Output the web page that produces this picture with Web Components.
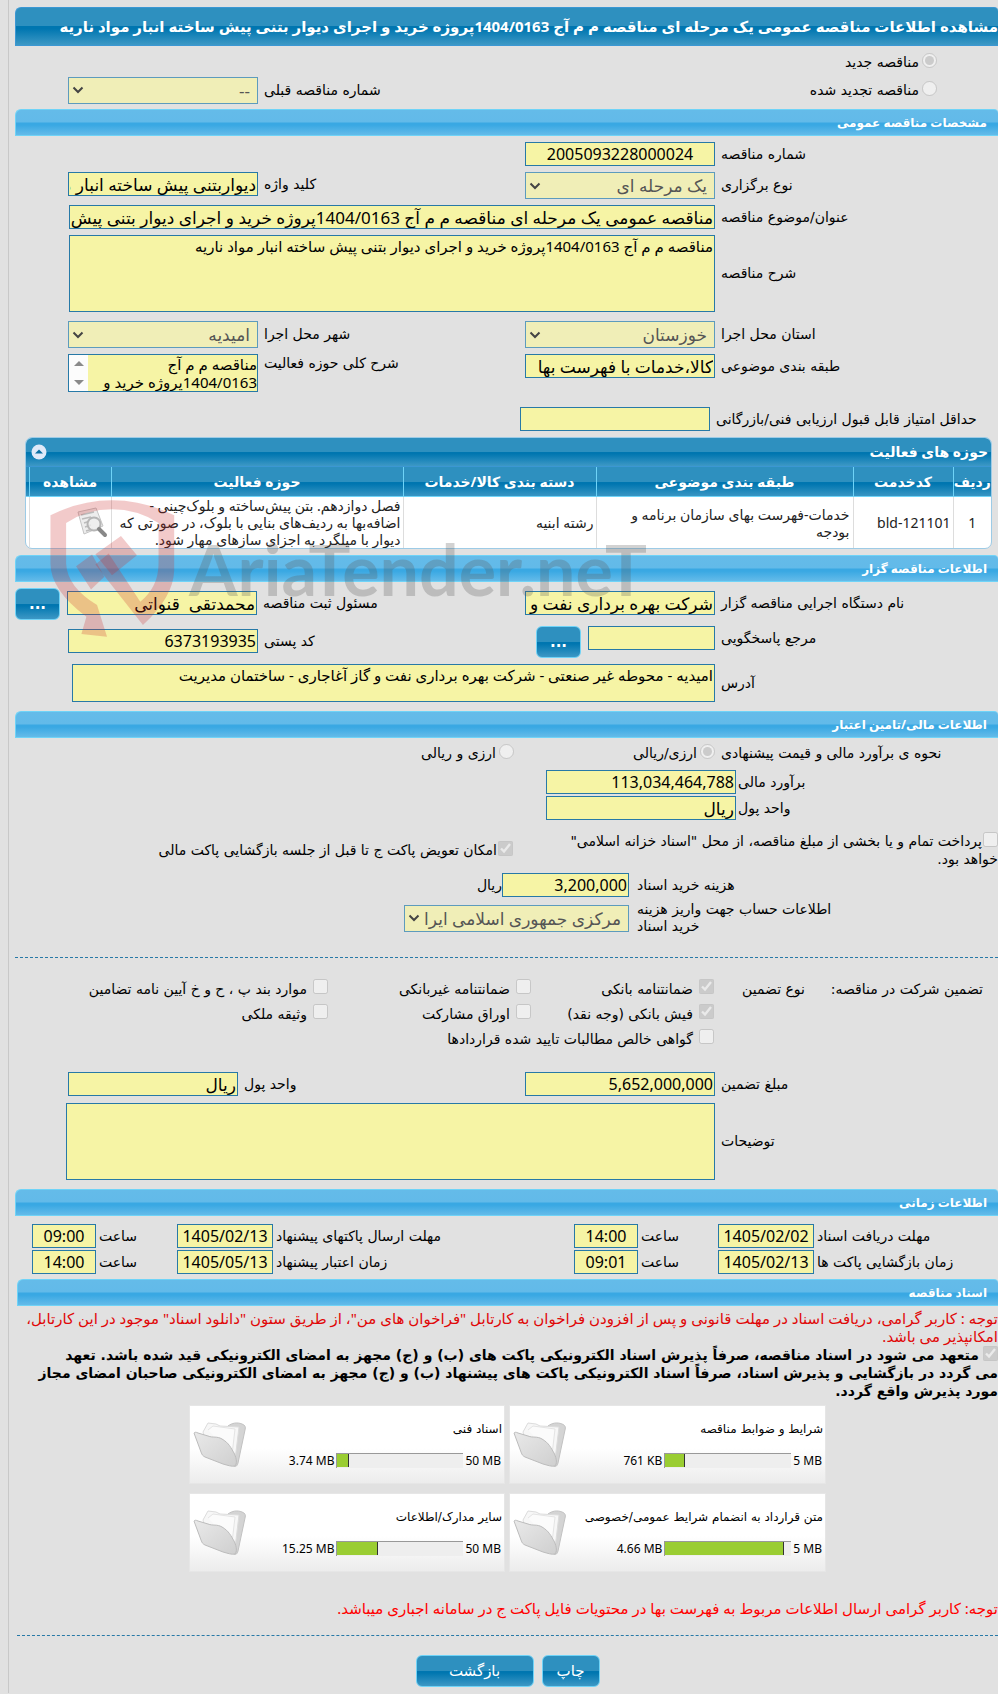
<!DOCTYPE html>
<html lang="fa" dir="rtl">
<head>
<meta charset="utf-8">
<meta name="viewport" content="width=device-width, initial-scale=1">
<title>مشاهده اطلاعات مناقصه عمومی</title>
<style>
    :root {
        --sans: 'DejaVu Sans', sans-serif;
        --mixed: 'Noto Sans', 'DejaVu Sans', sans-serif;
        --line: #2779a7;
        --field: #f6f4a5;
        --dark-bar: linear-gradient(#2e90bf 0, #2e90bf 50%, #0076b0 50%, #0076b0 56%, #3d98c5 100%);
        --light-bar: linear-gradient(#64bbe9 0, #62bae9 48%, #39a8e3 52%, #39a8e3 60%, #64bbe9 100%);
    }
    body {
        margin: 0;
        background: #e1e1e1;
        color: #000;
        font: 14px/18px var(--sans);
        overflow-x: hidden;
    }
    p { margin: 0; }
    hr {
        border: 0;
        border-top: 1px dashed var(--line);
        margin: 0;
    }
    .origin {
        display: grid;
        grid-template-columns: 473px 1fr;
        grid-template-rows: 28px 28px;
        align-items: center;
        padding: 2px 0 5px 53px;
    }
    .origin choice-box { padding-right: 61px; grid-column: 1; }
    .origin form-field { grid-area: 2 / 2; --label: 1fr; }
    .stack {
        display: flex;
        flex-direction: column;
        gap: 6px;
        padding: 6px 0;
    }
    .row {
        display: grid;
        grid-template-columns: 473px 1fr;
        padding-left: 53px;
        align-items: start;
    }
    .row > form-field:nth-of-type(2) { --label: 1fr; }
    .wide { --control: 1fr; padding-left: 54px; }
    .notes { padding-left: 51px; margin-top: 1px; }
    .top-gap { margin-top: 3px; }
    .score { --label: 288px; margin-top: 9px; }
    .short { --control: 170px; }
    .owner { padding: 9px 0; }
    .owner .row { padding-left: 0; }
    .owner .wide { padding-left: 57px; }
    .with-button { display: flex; gap: 7px; align-items: start; }
    .with-button form-field { flex: none; }
    .reply form-field { --control: 127px; }
    .grow { justify-content: space-between; }
    .grow form-field { flex: 1; --label: 1fr; }
    .grow ui-button { margin-top: -3px; }
    .postal { padding: 3px 0 0 53px; }
    .money { --label: 262px; --pad: 2px; }
    .kind {
        display: grid;
        grid-template-columns: 283px 201px 1fr;
        height: 30px;
        align-items: center;
    }
    .kind span { text-align: left; padding-left: 6px; }
    .finance { display: flex; flex-direction: column; gap: 2px; padding-top: 2px; }
    .options {
        display: grid;
        grid-template-columns: 450px 1fr;
        column-gap: 35px;
        padding: 12px 0 5px;
    }
    .options choice-box { align-self: center; --gap: 1px; }
    .fees { padding: 0 0 22px; gap: 4px; }
    .cost { --label: 369px; --pad: 8px; --control: 127px; }
    .account { --label: 369px; --pad: 8px; --control: 225px; --start: 145px; }
    .guarantee {
        display: grid;
        grid-template-columns: 178px 91px 183px 203px 1fr;
        grid-auto-rows: 25px;
        padding: 18px 15px 15px 0;
        align-items: center;
    }
    .guarantee choice-box { --gap: 6px; }
    .guarantee .first { grid-column: 3; }
    .guarantee .span { grid-column: 3 / 5; }
    .amounts { padding-bottom: 9px; }
    .times {
        display: grid;
        grid-template-columns: 280px 144px 1fr 145px;
        row-gap: 2px;
        padding: 8px 0 5px 17px;
        --label: 1fr;
        --pad: 3px;
    }
    .times form-field:nth-child(odd) { --control: 96px; }
    .times form-field:nth-child(even) { --control: 64px; }
    .docs { padding-left: 2px; }
    .note { color: #e00808; font: 15px/18px var(--mixed); padding-top: 3px; }
    .pledge { font-weight: bold; padding-top: 1px; margin-bottom: 5px; --gap: 4px; }
    .cards {
        display: grid;
        grid-template-columns: 317px 316px;
        gap: 9px 4px;
        justify-content: center;
    }
    .last-note { color: #ff0000; font: 15px/18px var(--mixed); padding: 27px 0 18px; }
    .actions {
        display: flex;
        justify-content: center;
        gap: 8px;
        padding: 19px 0 6px;
    }
</style>
</head>
<body>
<page-frame>
    <title-bar>مشاهده اطلاعات مناقصه عمومی یک مرحله ای مناقصه م م آج 1404/0163پروژه خرید و اجرای دیوار بتنی پیش ساخته انبار مواد ناریه</title-bar>

    <div class="origin">
        <choice-box type="radio" checked>مناقصه جدید</choice-box>
        <choice-box type="radio">مناقصه تجدید شده</choice-box>
        <form-field type="select" label="شماره مناقصه قبلی" value="--"></form-field>
    </div>

    <section-bar>مشخصات مناقصه عمومی</section-bar>
    <div class="stack">
        <div class="row"><form-field type="number" align="center" label="شماره مناقصه" value="2005093228000024"></form-field></div>
        <div class="row">
            <form-field type="select" label="نوع برگزاری" value="یک مرحله ای"></form-field>
            <form-field label="کلید واژه" value="دیواربتنی پیش ساخته انبار مواد ناریه"></form-field>
        </div>
        <form-field class="wide" label="عنوان/موضوع مناقصه" value="مناقصه عمومی یک مرحله ای مناقصه م م آج 1404/0163پروژه خرید و اجرای دیوار بتنی پیش ساخته انبار مواد ناریه"></form-field>
        <form-field class="wide" type="area" rows="77" label="شرح مناقصه" value="مناقصه م م آج 1404/0163پروژه خرید و اجرای دیوار بتنی پیش ساخته انبار مواد ناریه"></form-field>
        <div class="row top-gap">
            <form-field type="select" label="استان محل اجرا" value="خوزستان"></form-field>
            <form-field type="select" label="شهر محل اجرا" value="امیدیه"></form-field>
        </div>
        <div class="row">
            <form-field label="طبقه بندی موضوعی" value="کالا،خدمات با فهرست بها"></form-field>
            <form-field type="scroll" rows="38" label="شرح کلی حوزه فعالیت" value="مناقصه م م آج 1404/0163پروژه خرید و اجرای دیوار بتنی پیش ساخته انبار مواد ناریه"></form-field>
        </div>
        <form-field class="score" type="number" label="حداقل امتیاز قابل قبول ارزیابی فنی/بازرگانی"></form-field>
    </div>

    <activity-table></activity-table>

    <section-bar>اطلاعات مناقصه گزار</section-bar>
    <div class="stack owner">
        <div class="row">
            <form-field label="نام دستگاه اجرایی مناقصه گزار" value="شرکت بهره برداری نفت و گاز آغاجاری"></form-field>
            <div class="with-button grow">
                <form-field label="مسئول ثبت مناقصه" value="محمدتقی  قنواتی"></form-field>
                <ui-button width="45" dots>...</ui-button>
            </div>
        </div>
        <div class="row">
            <div class="with-button reply">
                <form-field label="مرجع پاسخگویی"></form-field>
                <ui-button width="45" dots>...</ui-button>
            </div>
            <div class="with-button grow postal">
                <form-field type="number" label="کد پستی" value="6373193935"></form-field>
            </div>
        </div>
        <form-field class="wide" type="area" rows="38" label="آدرس" value="امیدیه - محوطه غیر صنعتی - شرکت بهره برداری نفت و گاز آغاجاری - ساختمان مدیریت"></form-field>
    </div>

    <section-bar>اطلاعات مالی/تامین اعتبار</section-bar>
    <div class="kind">
        <span>نحوه ی برآورد مالی و قیمت پیشنهادی</span>
        <choice-box type="radio" checked>ارزی/ریالی</choice-box>
        <choice-box type="radio">ارزی و ریالی</choice-box>
    </div>
    <div class="finance">
        <form-field class="money" type="number" label="برآورد مالی" value="113,034,464,788"></form-field>
        <form-field class="money" label="واحد پول" value="ریال"></form-field>
    </div>
    <div class="options">
        <choice-box flow>پرداخت تمام و یا بخشی از مبلغ مناقصه، از محل "اسناد خزانه اسلامی" خواهد بود.</choice-box>
        <choice-box checked>امکان تعویض پاکت ج تا قبل از جلسه بازگشایی پاکت مالی</choice-box>
    </div>
    <div class="stack fees">
        <form-field class="cost" type="number" label="هزینه خرید اسناد" value="3,200,000">ریال</form-field>
        <form-field class="account" type="select" label="اطلاعات حساب جهت واریز هزینه خرید اسناد" value="مرکزی جمهوری اسلامی ایرا"></form-field>
    </div>

    <hr>
    <div class="guarantee">
        <span>تضمین شرکت در مناقصه:</span>
        <span>نوع تضمین</span>
        <choice-box checked>ضمانتنامه بانکی</choice-box>
        <choice-box>ضمانتنامه غیربانکی</choice-box>
        <choice-box>موارد بند پ ، ح و خ آیین نامه تضامین</choice-box>
        <choice-box class="first" checked>فیش بانکی (وجه نقد)</choice-box>
        <choice-box>اوراق مشارکت</choice-box>
        <choice-box>وثیقه ملکی</choice-box>
        <choice-box class="span">گواهی خالص مطالبات تایید شده قراردادها</choice-box>
    </div>
    <div class="stack amounts">
        <div class="row">
            <form-field type="number" label="مبلغ تضمین" value="5,652,000,000"></form-field>
            <form-field class="short" label="واحد پول" value="ریال"></form-field>
        </div>
        <form-field class="wide notes" type="area" rows="77" label="توضیحات"></form-field>
    </div>

    <section-bar>اطلاعات زمانی</section-bar>
    <div class="times">
        <form-field type="number" align="center" label="مهلت دریافت اسناد" value="1405/02/02"></form-field>
        <form-field type="number" align="center" label="ساعت" value="14:00"></form-field>
        <form-field type="number" align="center" label="مهلت ارسال پاکتهای پیشنهاد" value="1405/02/13"></form-field>
        <form-field type="number" align="center" label="ساعت" value="09:00"></form-field>
        <form-field type="number" align="center" label="زمان بازگشایی پاکت ها" value="1405/02/13"></form-field>
        <form-field type="number" align="center" label="ساعت" value="09:01"></form-field>
        <form-field type="number" align="center" label="زمان اعتبار پیشنهاد" value="1405/05/13"></form-field>
        <form-field type="number" align="center" label="ساعت" value="14:00"></form-field>
    </div>

    <div class="docs">
        <section-bar>اسناد مناقصه</section-bar>
        <p class="note">توجه : کاربر گرامی، دریافت اسناد در مهلت قانونی و پس از افزودن فراخوان به کارتابل "فراخوان های من"، از طریق ستون "دانلود اسناد" موجود در این کارتابل، امکانپذیر می باشد.</p>
        <choice-box class="pledge" flow checked>متعهد می شود در اسناد مناقصه، صرفاً پذیرش اسناد الکترونیکی پاکت های (ب) و (ج) مجهز به امضای الکترونیکی قید شده باشد. تعهد<br>می گردد در بازگشایی و پذیرش اسناد، صرفاً اسناد الکترونیکی پاکت های پیشنهاد (ب) و (ج) مجهز به امضای الکترونیکی صاحبان امضای مجاز<br>مورد پذیرش واقع گردد.</choice-box>
        <div class="cards">
            <file-card name="شرایط و ضوابط مناقصه" used="761 KB" limit="5 MB" percent="16"></file-card>
            <file-card name="اسناد فنی" used="3.74 MB" limit="50 MB" percent="9"></file-card>
            <file-card name="متن قرارداد به انضمام شرایط عمومی/خصوصی" used="4.66 MB" limit="5 MB" percent="94"></file-card>
            <file-card name="سایر مدارک/اطلاعات" used="15.25 MB" limit="50 MB" percent="32"></file-card>
        </div>
        <p class="last-note">توجه: کاربر گرامی ارسال اطلاعات مربوط به فهرست بها در محتویات فایل پاکت ج در سامانه اجباری میباشد.</p>
        <hr>
        <div class="actions">
            <ui-button width="58">چاپ</ui-button>
            <ui-button width="118">بازگشت</ui-button>
        </div>
    </div>

    <site-watermark slot="over"></site-watermark>
</page-frame>

<script>
    class PageFrame extends HTMLElement {
        constructor() {
            super();
            this.attachShadow({mode: 'open'}).innerHTML = `
            <style>
                :host {
                    display: block;
                    position: relative;
                }
                main {
                    margin-left: 8px;
                    border-left: 1px solid #c8c8c8;
                    padding: 7px 0 0 6px;
                }
            </style>
            <main><slot></slot></main>
            <slot name="over"></slot>
            `;
        }
    }

    class TitleBar extends HTMLElement {
        constructor() {
            super();
            this.attachShadow({mode: 'open'}).innerHTML = `
            <style>
                :host {
                    display: block;
                    box-sizing: border-box;
                    border: 1px solid #3b97d3;
                    border-right: 0;
                    border-radius: 6px 4px 0 0;
                    background: var(--dark-bar);
                    overflow: hidden;
                }
                h1 {
                    margin: 0;
                    color: #fff;
                    font: bold 15px/37px var(--mixed);
                    white-space: nowrap;
                }
            </style>
            <h1><slot></slot></h1>
            `;
        }
    }

    class SectionBar extends HTMLElement {
        constructor() {
            super();
            this.attachShadow({mode: 'open'}).innerHTML = `
            <style>
                :host {
                    display: block;
                    box-sizing: border-box;
                    border: 1px solid #6fd3f7;
                    border-right: 0;
                    border-radius: 6px 4px 0 0;
                    background: var(--light-bar);
                    padding-right: 11px;
                }
                h2 {
                    margin: 0;
                    color: #fff;
                    font: bold 12px/25px var(--mixed);
                }
            </style>
            <h2><slot></slot></h2>
            `;
        }
    }

    class ChoiceBox extends HTMLElement {
        constructor() {
            super();
            const type = this.getAttribute('type') || 'checkbox';
            const checked = this.hasAttribute('checked') ? 'checked' : '';
            this.attachShadow({mode: 'open'}).innerHTML = `
            <style>
                :host { display: block; }
                label {
                    display: flex;
                    align-items: center;
                    gap: var(--gap, 3px);
                    white-space: nowrap;
                }
                input {
                    flex: none;
                    width: 15px;
                    height: 15px;
                    margin: 0 0 4px;
                }
                :host([flow]) label {
                    display: block;
                    white-space: normal;
                }
                :host([flow]) input {
                    margin: 0 0 0 var(--gap, 0);
                    vertical-align: -1px;
                }
            </style>
            <label><input type="${type}" ${checked} disabled><span><slot></slot></span></label>
            `;
        }
    }

    class FormField extends HTMLElement {
        constructor() {
            super();
            this.attachShadow({mode: 'open'}).innerHTML = `
            <style>
                :host {
                    display: grid;
                    grid-template-columns: var(--label, 283px) var(--control, 190px) auto;
                    justify-content: start;
                }
                label {
                    box-sizing: border-box;
                    align-self: center;
                    text-align: left;
                    padding-left: var(--pad, 6px);
                    padding-right: var(--start, 0);
                    line-height: 17px;
                }
                :host([type=scroll]) label { align-self: start; padding-top: 1px; }
                .suffix { align-self: center; line-height: 17px; }
                input, textarea, select, .box {
                    box-sizing: border-box;
                    width: 100%;
                    margin: 0;
                    border: 1px solid var(--line);
                    border-radius: 0;
                    background: var(--field);
                    color: #000;
                    font-family: var(--mixed);
                    font-size: 17px;
                }
                input {
                    height: 24px;
                    padding: 0 1px;
                }
                input.number { font-size: 16px; }
                input.center { text-align: center; }
                textarea {
                    display: block;
                    padding: 1px;
                    resize: none;
                    overflow: hidden;
                    font-size: 15px;
                    line-height: 18px;
                }
                .pick {
                    display: grid;
                    align-items: center;
                    justify-items: end;
                }
                .pick > * { grid-area: 1 / 1; }
                select {
                    appearance: none;
                    height: 27px;
                    padding: 0 7px 0 14px;
                    border-color: #5d9bbd;
                    background: #f0eeb7;
                    color: #555;
                    opacity: 1;
                }
                .pick svg {
                    margin-left: 4px;
                    pointer-events: none;
                }
                .box { display: flex; }
                .box textarea { border: 0; flex: 1; width: auto; min-width: 0; padding: 0; }
                .bar {
                    flex: none;
                    width: 19px;
                    background: #fcfcfc;
                    display: flex;
                    flex-direction: column;
                    justify-content: space-between;
                    align-items: center;
                    padding: 6px 0;
                    box-sizing: border-box;
                }
            </style>
            <label for="control">${this.getAttribute('label')}</label>
            ${this.control()}
            <span class="suffix"><slot></slot></span>
            `;
        }
        control() {
            const type = this.getAttribute('type') || 'text';
            const value = this.getAttribute('value') || '';
            const height = this.getAttribute('rows');
            if (type == 'select') {
                return `<div class="pick">
                    <select id="control" disabled><option>${value}</option></select>
                    <svg width="12" height="8" viewBox="0 0 12 8"><path d="M1.500 1.500 6 6l4.500-4.500" fill="none" stroke="#444" stroke-width="2"/></svg>
                </div>`;
            }
            if (type == 'area') {
                return `<textarea id="control" readonly style="height: ${height}px">${value}</textarea>`;
            }
            if (type == 'scroll') {
                return `<div class="box" style="height: ${height}px">
                    <textarea id="control" readonly>${value}</textarea>
                    <div class="bar">
                        <svg width="10" height="5" viewBox="0 0 10 5"><path d="M0 5 5 0l5 5z" fill="#8a8a8a"/></svg>
                        <svg width="10" height="5" viewBox="0 0 10 5"><path d="M0 0h10L5 5z" fill="#8a8a8a"/></svg>
                    </div>
                </div>`;
            }
            return `<input id="control" type="text" class="${type} ${this.getAttribute('align') || ''}" value="${value}" readonly>`;
        }
    }

    class UiButton extends HTMLElement {
        constructor() {
            super();
            this.attachShadow({mode: 'open'}).innerHTML = `
            <style>
                :host { display: block; flex: none; }
                button {
                    width: ${this.getAttribute('width')}px;
                    height: 32px;
                    padding: 0;
                    border: 1px solid #6fd3f7;
                    border-radius: 6px;
                    background: var(--dark-bar);
                    color: #fff;
                    font-family: inherit;
                    font-size: 15px;
                    display: block;
                }
                :host([dots]) button { font-weight: bold; }
            </style>
            <button type="button"><slot></slot></button>
            `;
        }
    }

    class ActivityTable extends HTMLElement {
        constructor() {
            super();
            this.attachShadow({mode: 'open'}).innerHTML = `
            <style>
                :host {
                    display: block;
                    margin: 0 6px 6px 10px;
                    border: 1px solid #9dcbe6;
                    border-radius: 7px;
                    overflow: hidden;
                    background: #fff;
                    font-family: var(--mixed);
                }
                header {
                    display: flex;
                    align-items: center;
                    justify-content: space-between;
                    height: 28px;
                    padding: 0 3px 0 5px;
                    background: var(--dark-bar);
                    border-bottom: 1px solid #3b97d3;
                    color: #fff;
                }
                h3 { margin: 0; font-size: 14px; }
                header button {
                    border: 0;
                    padding: 0;
                    background: none;
                    display: flex;
                }
                table {
                    width: 100%;
                    table-layout: fixed;
                    border-collapse: collapse;
                }
                thead tr { background: var(--dark-bar); }
                th {
                    height: 29px;
                    padding: 0;
                    color: #fff;
                    border-left: 1px solid #6fd3f7;
                    border-bottom: 1px solid #6fd3f7;
                    white-space: nowrap;
                    line-height: 20px;
                }
                td {
                    height: 51px;
                    padding: 0 2px;
                    border-left: 1px solid #ddd;
                    color: #222;
                    line-height: 17px;
                }
                th:last-child, td:last-child { border-left: 0; }
                .num { text-align: center; }
                .scope { padding-left: 20px; padding-right: 3px; }
                td a { display: block; width: 32px; margin-right: 1px; }
                td svg { display: block; }
            </style>
            <header>
                <h3>حوزه های فعالیت</h3>
                <button type="button" aria-label="بستن">
                    <svg width="16" height="16" viewBox="0 0 16 16"><circle cx="8" cy="8" r="7.500" fill="#dfe9f8"/><path d="M4 9.500h8L8 5.500z" fill="#0b6fa3"/></svg>
                </button>
            </header>
            <table>
                <colgroup>
                    <col style="width: 38px"><col style="width: 100px"><col style="width: 257px"><col style="width: 193px"><col><col style="width: 82px"><col style="width: 3px">
                </colgroup>
                <thead>
                    <tr><th>ردیف</th><th>کدخدمت</th><th>طبقه بندی موضوعی</th><th>دسته بندی کالا/خدمات</th><th>حوزه فعالیت</th><th>مشاهده</th><th></th></tr>
                </thead>
                <tbody>
                    <tr>
                        <td class="num">1</td>
                        <td>bld-121101</td>
                        <td class="scope">خدمات-فهرست بهای سازمان برنامه و بودجه</td>
                        <td>رشته ابنیه</td>
                        <td>فصل دوازدهم. بتن پیش‌ساخته و بلوک‌چینی - اضافه‌بها به ردیف‌های بنایی با بلوک، در صورتی که دیوار با میلگرد به اجزای سازهای مهار شود.</td>
                        <td>
                            <a href="#" aria-label="مشاهده">
                                <svg width="32" height="32" viewBox="0 0 32 32">
                                    <path d="M2 5 20 1l7 18-19 8z" fill="#ededed" stroke="#c4c4c4"/>
                                    <path d="m5 8 13-3M6 12l9-2M8 16l6-2M9 20l6-2M10 24l7-2" stroke="#bbb" stroke-width="1.500"/>
                                    <circle cx="18" cy="17" r="6.500" fill="#eee" fill-opacity=".8" stroke="#b5b5b5" stroke-width="2"/>
                                    <path d="m23 22 6 6" stroke="#888" stroke-width="4" stroke-linecap="round"/>
                                </svg>
                            </a>
                        </td>
                        <td></td>
                    </tr>
                </tbody>
            </table>
            `;
        }
    }

    class FileCard extends HTMLElement {
        constructor() {
            super();
            this.attachShadow({mode: 'open'}).innerHTML = `
            <style>
                :host {
                    display: flex;
                    justify-content: space-between;
                    align-items: center;
                    box-sizing: border-box;
                    height: 79px;
                    padding: 0 2px 0 3px;
                    border: 1px solid #e6e6e6;
                    background: linear-gradient(#fff 55%, #ececec);
                    font-size: 12px;
                }
                .info {
                    display: flex;
                    flex-direction: column;
                    align-items: flex-start;
                    gap: 15px;
                    padding-bottom: 1px;
                }
                .usage {
                    display: flex;
                    align-items: center;
                    direction: ltr;
                    gap: 2px;
                    padding-right: 1px;
                    font-family: var(--mixed);
                    line-height: 15px;
                }
                .track {
                    box-sizing: border-box;
                    width: 127px;
                    height: 15px;
                    border-top: 1px solid #999;
                    border-left: 1px solid #999;
                    background: #eee;
                }
                .fill {
                    box-sizing: border-box;
                    width: ${this.getAttribute('percent')}%;
                    height: 13px;
                    background: #9acd32;
                    border-right: 1px solid #333;
                }
            </style>
            <div class="info">
                <span>${this.getAttribute('name')}</span>
                <div class="usage">
                    <span>${this.getAttribute('used')}</span>
                    <div class="track"><div class="fill"></div></div>
                    <span>${this.getAttribute('limit')}</span>
                </div>
            </div>
            <svg width="54" height="50" viewBox="0 0 54 50">
                <defs>
                    <linearGradient id="front" x1="0" y1="0" x2="1" y2="1"><stop offset="0" stop-color="#e9e9e9"/><stop offset="1" stop-color="#cfcfcf"/></linearGradient>
                </defs>
                <path d="M35 6c4-3 9-4 14-2 3 1 4 3 3 6l-7 33c-1 3-2 4-4 3l-8-10z" fill="#d4d4d4" stroke="#c2c2c2"/>
                <path d="M10 12 15 3l8 1 4 2 19 1-4 33-27-8z" fill="#f7f7f7" stroke="#dcdcdc"/>
                <path d="M15 10 20 6l22 3-3 26" fill="#fbfbfb" stroke="#e4e4e4"/>
                <path d="M1 13c1-1 2-1 4 0l10 3c5 2 9 0 14 3 7 4 9 9 12 14 3 6 3 11 1 13-3 1-8-1-12-2L12 37c-2-1-3-2-4-5z" fill="url(#front)" stroke="#bcbcbc"/>
            </svg>
            `;
        }
    }

    // stamp laid over the middle of the form
    class SiteWatermark extends HTMLElement {
        constructor() {
            super();
            this.attachShadow({mode: 'open'}).innerHTML = `
            <style>
                :host {
                    position: absolute;
                    left: 47px;
                    top: 497px;
                    display: flex;
                    direction: ltr;
                    align-items: center;
                    gap: 12px;
                    pointer-events: none;
                }
                span {
                    color: rgba(90, 90, 90, .27);
                    font: bold 70px/84px Lato, 'Liberation Sans', sans-serif;
                    white-space: nowrap;
                }
            </style>
            <svg width="130" height="143" viewBox="140 200 390 430">
                <g fill="#cc2b2b" fill-opacity=".25">
                    <path d="M150 255Q240 210 335 210T522 255V420Q520 500 428 585L285 403 325 370 420 515Q475 470 475 400V278Q410 237 335 237T197 278V400Q200 470 290 525L320 620 243 612 258 560Q150 480 150 400z" fill-rule="evenodd"/>
                    <path d="m362 317 48 58-75 60-50-63zM227 408l48-35 37 67-40 38z"/>
                </g>
            </svg>
            <span>AriaTender.neT</span>
            `;
        }
    }

    window.customElements.define('page-frame', PageFrame);
    window.customElements.define('title-bar', TitleBar);
    window.customElements.define('section-bar', SectionBar);
    window.customElements.define('choice-box', ChoiceBox);
    window.customElements.define('form-field', FormField);
    window.customElements.define('ui-button', UiButton);
    window.customElements.define('activity-table', ActivityTable);
    window.customElements.define('file-card', FileCard);
    window.customElements.define('site-watermark', SiteWatermark);
</script>
</body>
</html>
